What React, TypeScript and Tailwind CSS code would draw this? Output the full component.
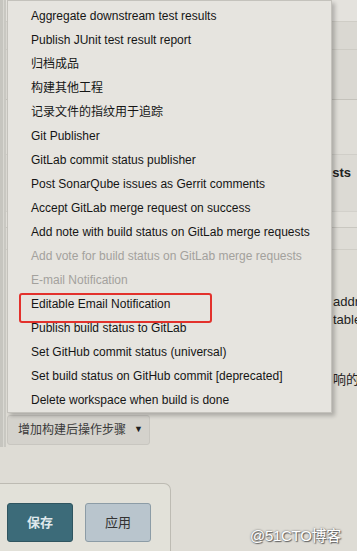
const items: { label: string; disabled?: boolean }[] = [
  { label: "Aggregate downstream test results" },
  { label: "Publish JUnit test result report" },
  { label: "归档成品" },
  { label: "构建其他工程" },
  { label: "记录文件的指纹用于追踪" },
  { label: "Git Publisher" },
  { label: "GitLab commit status publisher" },
  { label: "Post SonarQube issues as Gerrit comments" },
  { label: "Accept GitLab merge request on success" },
  { label: "Add note with build status on GitLab merge requests" },
  { label: "Add vote for build status on GitLab merge requests", disabled: true },
  { label: "E-mail Notification", disabled: true },
  { label: "Editable Email Notification" },
  { label: "Publish build status to GitLab" },
  { label: "Set GitHub commit status (universal)" },
  { label: "Set build status on GitHub commit [deprecated]" },
  { label: "Delete workspace when build is done" },
];

const font = "font-['Liberation_Sans','Noto_Sans_CJK_SC',sans-serif]";

export default function App() {
  return (
    <div className={`relative w-[357px] h-[551px] overflow-hidden bg-[#dedcd5] ${font}`}>
      {/* page behind the dropdown */}
      <div className="flex flex-col h-full">
        <div className="flex h-[447px]">
          <div className="w-[6px] flex">
            <div className="w-[3px] bg-[#c6c5bf]" />
            <div className="w-[1px] bg-[#d9d8d2]" />
            <div className="w-[2px] bg-[#c9c8c2]" />
          </div>
          <div className="flex-1 flex flex-col">
            <div className="h-[22px] bg-[#e4e2dd] border-b border-[#cfcdc6]" />
            <div className="h-[28px] bg-[#dad8d2] border-b border-[#cdcbc4]" />
            <div className="h-[50px] bg-[#dad8d2] border-b border-[#c4c2bb]" />
            <div className="h-[55px] bg-[#dfddd7] border-b border-[#d0cec8]" />
            <div className="h-[57px] bg-[#dcdad4] border-b border-[#d3d1cb] pt-[10px]">
              <div className="ml-auto mr-[6px] w-[22px] overflow-hidden flex justify-end whitespace-nowrap text-[13px] font-bold text-[#222] leading-[16px]">
                requests
              </div>
            </div>
            <div className="h-[16px] bg-[#e2e0da] border-b border-[#c9c7c0]" />
            <div className="h-[22px] bg-[#dedcd6] border-b border-[#cfcdc6]" />
            <div className="flex-1 flex flex-col">
              <div className="ml-auto w-[24px] overflow-hidden whitespace-nowrap text-[13px] leading-[18px] text-[#222] mt-[43px]">
                <div>addr</div>
                <div>table</div>
                <div className="mt-[42px]">响的</div>
              </div>
              <div className="mt-auto mb-[2px] ml-[1px] w-[143px] h-[30px] rounded-[3px] bg-[#d4d2cc] border border-[#c8c6c0] flex items-center pl-[10px] text-[12px] text-[#3a3a3a]">
                增加构建后操作步骤
                <span className="ml-[8px] text-[9px] text-[#222]">▼</span>
              </div>
            </div>
          </div>
        </div>
        <div className="mt-[36px] w-[171px] flex-1 bg-[#e2e1d9] border-t border-r border-[#bdbbb3] rounded-tr-[7px] flex gap-[12px] pl-[7px] pt-[19px]">
          <button className="w-[66px] h-[39px] rounded-[3px] bg-[#3c6b79] border border-[#2f5560] text-[#dfe8ec] text-[13px] font-bold">
            保存
          </button>
          <button className="w-[66px] h-[39px] rounded-[3px] bg-[#b9c5cd] border border-[#8c9ca6] text-[#333] text-[13px]">
            应用
          </button>
        </div>
      </div>

      {/* dropdown menu */}
      <div className="absolute left-[7px] top-0 w-[325px] h-[413px] bg-[#e6e4df] border border-[#c4c2bc] shadow-[3px_3px_4px_rgba(0,0,0,0.22)] pt-[3px]">
        {items.map((it) => (
          <div
            key={it.label}
            className={`h-[24px] leading-[24px] pl-[23px] text-[12px] whitespace-nowrap ${
              it.disabled ? "text-[#a3a19d]" : "text-[#151515]"
            }`}
          >
            {it.label}
          </div>
        ))}
      </div>

      {/* annotation box */}
      <div className="absolute left-[19px] top-[293px] w-[193px] h-[30px] rounded-[3px] border-2 border-[#e3312c]" />

      {/* watermark */}
      <div className="absolute left-[250px] top-[525px] text-[15px] text-white [text-shadow:0_0_2px_#555,1px_1px_1px_#666] tracking-[-0.3px]">
        @51CTO博客
      </div>
    </div>
  );
}
